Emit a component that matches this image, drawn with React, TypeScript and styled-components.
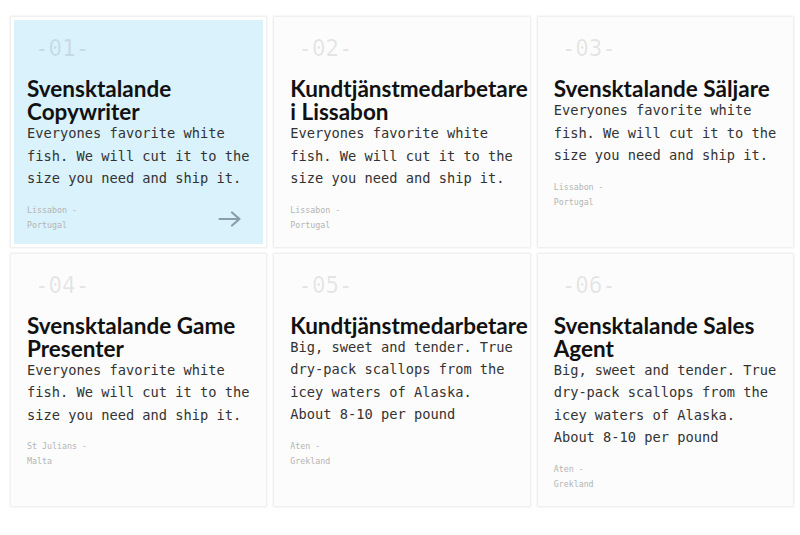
import React from "react";
import styled, { createGlobalStyle } from "styled-components";

const Global = createGlobalStyle`
  html, body { margin: 0; padding: 0; background: #ffffff; }
  body { width: 800px; height: 535px; overflow: hidden; }
`;

const Grid = styled.div`
  display: grid;
  grid-template-columns: repeat(3, minmax(0, 1fr));
  gap: 7px 8px;
  padding: 17px 7px 0 11px;
  box-sizing: border-box;
  width: 800px;
`;

const Card = styled.div<{ $active?: boolean }>`
  position: relative;
  box-sizing: border-box;
  background: ${(p) => (p.$active ? "#d9f2fc" : "#fcfcfc")};
  border: 3px solid ${(p) => (p.$active ? "#ffffff" : "#fcfcfc")};
  box-shadow: 0 0 2px 1px rgba(0, 0, 0, 0.09);
  padding: 13px 8px 11px 13px;
  display: flex;
  flex-direction: column;
`;

const Num = styled.div`
  font-family: "DejaVu Sans Mono", monospace;
  font-size: 22.5px;
  line-height: 30px;
  color: rgba(0, 0, 0, 0.1);
  padding-left: 8px;
  margin: 0 0 14px;
`;

const Title = styled.h2`
  margin: 0;
  font-family: Lato, "Noto Sans", sans-serif;
  font-weight: 700;
  font-size: 22.5px;
  line-height: 23px;
  color: #111;
`;

const Desc = styled.p`
  margin: -1px 0 0 0;
  font-family: "DejaVu Sans Mono", monospace;
  font-size: 13.7px;
  line-height: 22.5px;
  color: #333;
`;

const Footer = styled.div`
  display: flex;
  align-items: flex-end;
  justify-content: space-between;
  margin-top: 13px;
`;

const Location = styled.div`
  font-family: "DejaVu Sans Mono", monospace;
  font-size: 8.3px;
  line-height: 15px;
  color: #b4b4b4;
`;

const Arrow = styled.svg`
  width: 23px;
  height: 16px;
  margin: 0 14px 6px 0;
`;

type Job = {
  n: string;
  title: string;
  desc: string;
  city: string;
  country: string;
  active?: boolean;
};

const fish = "Everyones favorite white fish. We will cut it to the size you need and ship it.";
const scallops = "Big, sweet and tender. True dry-pack scallops from the icey waters of Alaska. About 8-10 per pound";

const jobs: Job[] = [
  { n: "01", title: "Svensktalande Copywriter", desc: fish, city: "Lissabon", country: "Portugal", active: true },
  { n: "02", title: "Kundtjänstmedarbetare i Lissabon", desc: fish, city: "Lissabon", country: "Portugal" },
  { n: "03", title: "Svensktalande Säljare", desc: fish, city: "Lissabon", country: "Portugal" },
  { n: "04", title: "Svensktalande Game Presenter", desc: fish, city: "St Julians", country: "Malta" },
  { n: "05", title: "Kundtjänstmedarbetare", desc: scallops, city: "Aten", country: "Grekland" },
  { n: "06", title: "Svensktalande Sales Agent", desc: scallops, city: "Aten", country: "Grekland" },
];

export default function App() {
  return (
    <>
      <Global />
      <Grid>
        {jobs.map((j) => (
          <Card key={j.n} $active={j.active}>
            <Num>-{j.n}-</Num>
            <Title>{j.title}</Title>
            <Desc>{j.desc}</Desc>
            <Footer>
              <Location>
                {j.city} -<br />
                {j.country}
              </Location>
              {j.active && (
                <Arrow viewBox="0 0 23 16" fill="none" stroke="#8a9ea8" strokeWidth="2.2" strokeLinecap="round" strokeLinejoin="round">
                  <path d="M1.5 8H21.5M14 1.5L21.5 8L14 14.5" />
                </Arrow>
              )}
            </Footer>
          </Card>
        ))}
      </Grid>
    </>
  );
}
